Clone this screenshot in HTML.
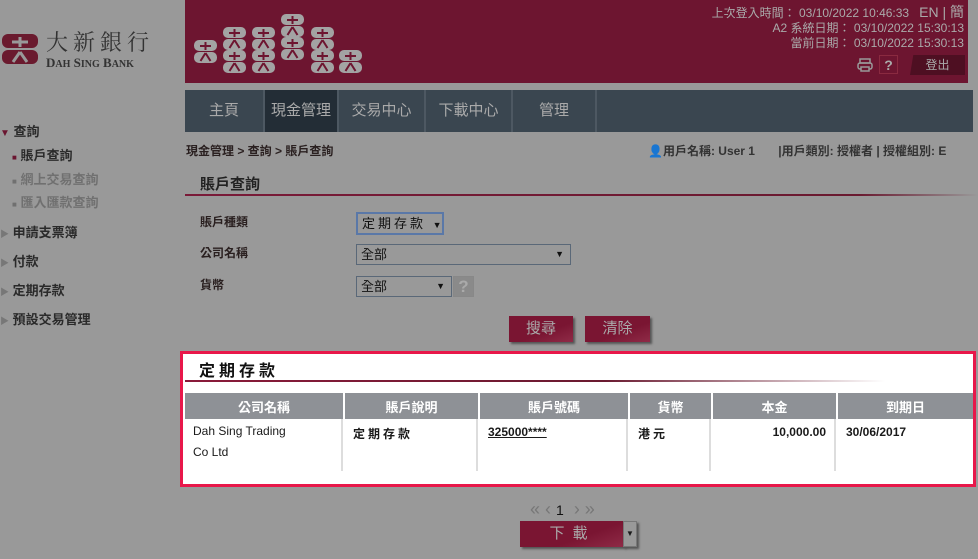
<!DOCTYPE html>
<html><head><meta charset="utf-8"><style>
*{margin:0;padding:0;box-sizing:border-box}
body{width:978px;height:559px;background:#999;font-family:"Liberation Sans","Noto Sans CJK TC",sans-serif;position:relative;overflow:hidden;color:#1a1a1a}
.a{position:absolute}
.banner{left:185px;top:0;width:783px;height:83px;background:#6d1530}
.nav{left:185px;top:90px;width:788px;height:42px;background:#3a4650}
.nav div{position:absolute;top:0;height:42px;line-height:42px;color:#aaa;font-size:15px;text-align:center;border-right:2px solid #4d5862}
.side{font-size:12px;font-weight:bold;color:#2a2a2a}
.lbl{font-size:12px;font-weight:bold;color:#2a2020}
.sel{background:#999;border:1px solid #5a6878;font-size:13px;height:21px;line-height:19px;padding-left:4px;color:#111}
.btn{background:linear-gradient(160deg,#7a1532 60%,#8f2b47);color:#aaa;font-size:15px;text-align:center;box-shadow:2px 2px 2px #555}
table{border-collapse:separate;border-spacing:2px 0}
th{background:#8e9196;color:#fff;font-size:13px;height:26px;font-weight:bold}
td{vertical-align:top;font-size:12px;padding:6px 8px;height:52px;border-right:2px solid #ddd}
</style></head><body>
<!-- logo -->
<svg class="a" style="left:2px;top:34px" width="36" height="30" viewBox="0 0 36 30"><rect x="0" y="0" width="36" height="14" rx="6" fill="#6a1a2e"/><rect x="0" y="16" width="36" height="14" rx="6" fill="#6a1a2e"/><path d="M18 3v10M10 8h16M18 18l-7 10M18 18l7 10" stroke="#999" stroke-width="3"/></svg>
<div class="a" style="left:46px;top:30px;font-size:22px;letter-spacing:5px;color:#333;font-family:'Noto Serif CJK SC',serif;line-height:24px">大新銀行</div>
<div class="a" style="left:46px;top:55px;font-size:13px;color:#333;font-family:'Liberation Serif',serif;font-weight:bold">D<span style="font-size:10px">AH</span> S<span style="font-size:10px">ING</span> B<span style="font-size:10px">ANK</span></div>
<div class="a banner"></div>
<svg class="a" style="left:185px;top:0" width="190" height="83">
<defs><g id="L"><rect x="0" y="0" width="23" height="11" rx="5" fill="#a3a3a3"/><rect x="0" y="12" width="23" height="11" rx="5" fill="#a3a3a3"/><path d="M11.5 2v8M6 6h11M11.5 13l-5 8M11.5 13l5 8" stroke="#6d1530" stroke-width="2"/></g></defs>
<use href="#L" x="9" y="40"/>
<use href="#L" x="38" y="27"/><use href="#L" x="38" y="50"/>
<use href="#L" x="67" y="27"/><use href="#L" x="67" y="50"/>
<use href="#L" x="96" y="14"/><use href="#L" x="96" y="37"/>
<use href="#L" x="126" y="27"/><use href="#L" x="126" y="50"/>
<use href="#L" x="154" y="50"/>
</svg>
<div class="a" style="right:14px;top:5px;text-align:right;color:#aaa;font-size:12px;line-height:15px">上次登入時間： 03/10/2022 10:46:33 &nbsp; <span style="font-size:14px">EN | 簡</span><br>A2 系統日期： 03/10/2022 15:30:13<br>當前日期： 03/10/2022 15:30:13</div>
<svg class="a" style="left:857px;top:58px" width="16" height="14"><rect x="3" y="1" width="10" height="4" fill="none" stroke="#999" stroke-width="1.5"/><rect x="1" y="5" width="14" height="6" rx="2" fill="none" stroke="#999" stroke-width="1.5"/><rect x="4" y="9" width="8" height="4" fill="#6d1530" stroke="#999" stroke-width="1.5"/></svg>
<div class="a" style="left:879px;top:55px;width:19px;height:19px;border:1px solid #8a2a40;color:#aaa;text-align:center;font-weight:bold;font-size:14px;line-height:18px">?</div>
<div class="a" style="left:910px;top:55px;width:55px;height:20px;background:#4e0f22;color:#aaa;font-size:12px;text-align:center;line-height:20px;clip-path:polygon(6% 0,100% 0,100% 100%,0 100%)">登出</div>
<div class="a nav"><div style="left:0;width:80px">主頁</div><div style="left:80px;width:74px;background:#232d36;color:#aaa">現金管理</div><div style="left:154px;width:87px">交易中心</div><div style="left:241px;width:87px">下載中心</div><div style="left:328px;width:84px">管理</div></div>
<div class="a side" style="left:0;top:123px;line-height:18px;font-size:13px">
<div style="position:absolute;top:0;left:0;width:160px"><span style="color:#6a1530;font-size:10px">▼</span> 查詢</div>
<div style="position:absolute;top:24px;left:12px;width:160px"><span style="color:#6a1530;font-size:8px">■</span> 賬戶查詢</div>
<div style="position:absolute;top:48px;left:12px;width:160px;color:#707070"><span style="font-size:8px">■</span> 網上交易查詢</div>
<div style="position:absolute;top:71px;left:12px;width:160px;color:#707070"><span style="font-size:8px">■</span> 匯入匯款查詢</div>
<div style="position:absolute;top:101px;left:0;width:160px"><span style="color:#777;font-size:9px">▶</span> 申請支票簿</div>
<div style="position:absolute;top:130px;left:0;width:160px"><span style="color:#777;font-size:9px">▶</span> 付款</div>
<div style="position:absolute;top:159px;left:0;width:160px"><span style="color:#777;font-size:9px">▶</span> 定期存款</div>
<div style="position:absolute;top:188px;left:0;width:160px"><span style="color:#777;font-size:9px">▶</span> 預設交易管理</div>
</div>
<div class="a lbl" style="left:186px;top:142px">現金管理 &gt; 查詢 &gt; 賬戶查詢</div>
<div class="a lbl" style="left:648px;top:142px;color:#333">👤用戶名稱: User 1 &nbsp; &nbsp; &nbsp; |用戶類別: 授權者 | 授權組別: E</div>
<div class="a" style="left:200px;top:173px;font-size:15px;font-weight:bold;color:#222">賬戶查詢</div>
<div class="a" style="left:185px;top:194px;width:793px;height:2px;background:linear-gradient(90deg,#7a1a38,#6a1a30 85%,#999)"></div>
<div class="a lbl" style="left:200px;top:213px">賬戶種類</div>
<div class="a lbl" style="left:200px;top:244px">公司名稱</div>
<div class="a lbl" style="left:200px;top:276px">貨幣</div>
<div class="a sel" style="left:356px;top:212px;width:88px;height:23px;border:2px solid #5a78a8;letter-spacing:3px">定期存款 <span style="font-size:9px;letter-spacing:0">▼</span></div>
<div class="a sel" style="left:356px;top:244px;width:215px">全部<span style="position:absolute;right:6px;font-size:9px">▼</span></div>
<div class="a sel" style="left:356px;top:276px;width:96px">全部<span style="position:absolute;right:6px;font-size:9px">▼</span></div>
<div class="a" style="left:453px;top:276px;width:21px;height:21px;background:#8a8a8a;border:1px solid #888;color:#aaa;text-align:center;font-size:17px;font-weight:bold;line-height:20px">?</div>
<div class="a btn" style="left:509px;top:316px;width:64px;height:26px;line-height:26px">搜尋</div>
<div class="a btn" style="left:585px;top:316px;width:65px;height:26px;line-height:26px">清除</div>
<div class="a" style="left:180px;top:351px;width:796px;height:136px;background:#fff;border:3px solid #e8174a"></div>
<div class="a" style="left:199px;top:357px;font-size:16px;font-weight:bold;letter-spacing:4px;color:#111">定期存款</div>
<div class="a" style="left:185px;top:380px;width:700px;height:2px;background:linear-gradient(90deg,#8a1a3a,#6a1a30 60%,#fff)"></div>
<table class="a" style="left:183px;top:393px;width:792px">
<tr><th style="width:158px">公司名稱</th><th style="width:133px">賬戶說明</th><th style="width:148px">賬戶號碼</th><th style="width:81px">貨幣</th><th style="width:123px">本金</th><th>到期日</th></tr>
<tr><td style="line-height:21px;padding-top:2px">Dah Sing Trading<br>Co Ltd</td><td style="font-weight:bold;letter-spacing:3px">定期存款</td><td style="font-weight:bold"><u>325000****</u></td><td style="font-weight:bold;letter-spacing:3px">港元</td><td style="font-weight:bold;text-align:right">10,000.00</td><td style="font-weight:bold;border:none">30/06/2017</td></tr>
</table>
<div class="a" style="left:530px;top:499px;font-size:18px;color:#777;line-height:20px">« ‹ <span style="color:#111;font-size:14px">1</span> &nbsp;› »</div>
<div class="a btn" style="left:520px;top:521px;width:105px;height:26px;line-height:26px;letter-spacing:8px">下載</div>
<div class="a" style="left:623px;top:521px;width:14px;height:26px;background:#999;border:1px solid #777;font-size:8px;text-align:center;line-height:24px;box-shadow:2px 2px 2px #555">▼</div>
</body></html>
